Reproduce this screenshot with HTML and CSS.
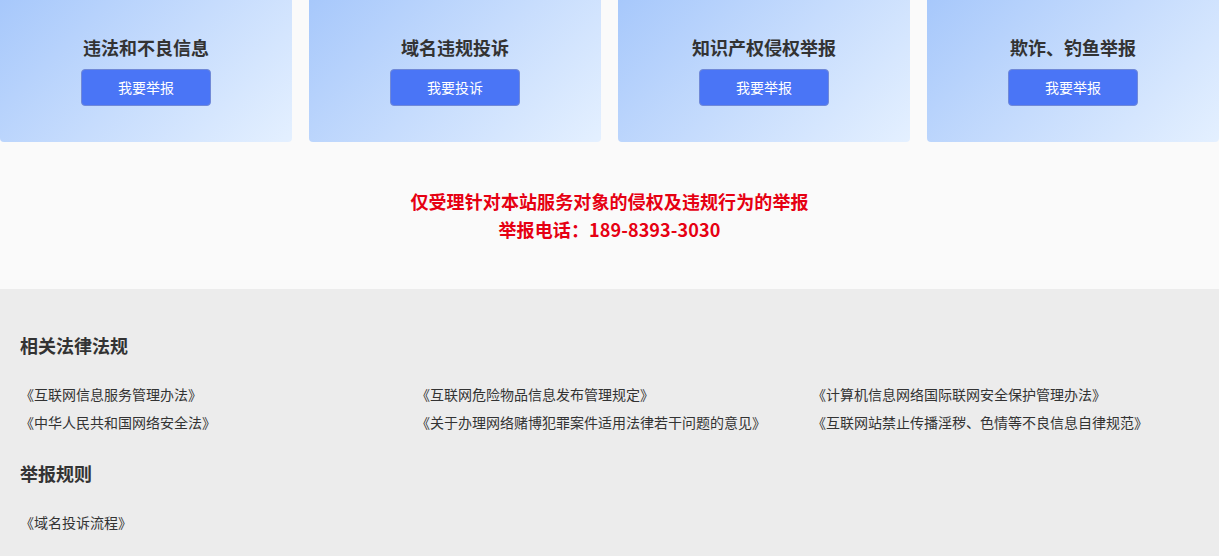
FILE: index.html
```html
<!DOCTYPE html>
<html lang="zh-CN">
<head>
    <meta charset="UTF-8">
    <meta name="viewport" content="width=device-width, initial-scale=1.0">
    <title>举报中心</title>
    <link rel="stylesheet" href="styles.css">
</head>
<body>
    <!-- 举报入口 -->
    <div class="report-top">
        <div class="report-cards">
            <div class="report-card">
                <h3>违法和不良信息</h3>
                <a class="report-btn" href="#">我要举报</a>
            </div>
            <div class="report-card">
                <h3>域名违规投诉</h3>
                <a class="report-btn" href="#">我要投诉</a>
            </div>
            <div class="report-card">
                <h3>知识产权侵权举报</h3>
                <a class="report-btn" href="#">我要举报</a>
            </div>
            <div class="report-card">
                <h3>欺诈、钓鱼举报</h3>
                <a class="report-btn" href="#">我要举报</a>
            </div>
        </div>
        <div class="report-notice">
            <p>仅受理针对本站服务对象的侵权及违规行为的举报</p>
            <p>举报电话：189-8393-3030</p>
        </div>
    </div>

    <!-- 法律法规 -->
    <div class="law-section">
        <h3>相关法律法规</h3>
        <ul class="law-list">
            <li><a href="#">《互联网信息服务管理办法》</a></li>
            <li><a href="#">《互联网危险物品信息发布管理规定》</a></li>
            <li><a href="#">《计算机信息网络国际联网安全保护管理办法》</a></li>
            <li><a href="#">《中华人民共和国网络安全法》</a></li>
            <li><a href="#">《关于办理网络赌博犯罪案件适用法律若干问题的意见》</a></li>
            <li><a href="#">《互联网站禁止传播淫秽、色情等不良信息自律规范》</a></li>
        </ul>
        <h3>举报规则</h3>
        <ul class="law-list">
            <li><a href="#">《域名投诉流程》</a></li>
        </ul>
    </div>
</body>
</html>
```

FILE: styles.css
```css
body {
    margin: 0;
    font-family: 'Noto Sans CJK SC', 'Noto Sans', sans-serif;
    color: #333;
    background-color: #ececec;
}

a {
    text-decoration: none;
}

.report-top {
    background-color: #fafafa;
    padding-bottom: 46px;
}

.report-cards {
    display: grid;
    grid-template-columns: repeat(4, 1fr);
    gap: 17px;
}

.report-card {
    height: 142px;
    box-sizing: border-box;
    padding-top: 35px;
    display: flex;
    flex-direction: column;
    align-items: center;
    border-radius: 0 0 4px 4px;
    background: linear-gradient(135deg, #a7c8fb 0%, #c6dcfd 50%, #e4f0ff 100%);
}

.report-card h3 {
    margin: 0 0 10px 0;
    font-size: 18px;
    line-height: 24px;
    font-weight: bold;
    color: #333;
}

.report-btn {
    display: block;
    width: 130px;
    height: 37px;
    box-sizing: border-box;
    line-height: 35px;
    text-align: center;
    font-size: 14px;
    color: #fff;
    background-color: #4a75f6;
    border: 1px solid #7089d8;
    border-radius: 4px;
}

.report-notice {
    margin-top: 45px;
    text-align: center;
}

.report-notice p {
    margin: 0;
    font-size: 18px;
    line-height: 28px;
    font-weight: bold;
    color: #e60012;
    letter-spacing: 0.1px;
}

.law-section {
    padding: 43px 20px 20px 20px;
}

.law-section h3 {
    margin: 0;
    font-size: 18px;
    line-height: 26px;
    font-weight: bold;
    color: #333;
}

.law-list {
    list-style: none;
    margin: 22px 0 24px 0;
    padding: 0;
    display: grid;
    grid-template-columns: 396px 396px 1fr;
}

.law-list:last-child {
    margin-bottom: 0;
}

.law-list li {
    font-size: 14px;
    line-height: 28px;
}

.law-list a {
    color: #333;
}
```
